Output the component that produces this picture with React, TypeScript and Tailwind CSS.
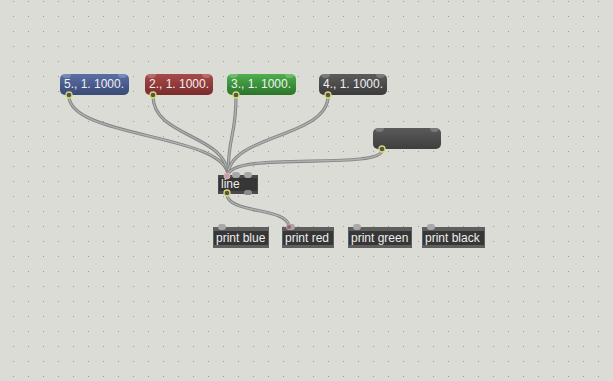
import React from "react";

const font = { fontFamily: '"Liberation Sans", Arial, sans-serif' };

function Msg({ left, top, w, cls, label }: { left: string; top: string; w: string; cls: string; label: string }) {
  return (
    <div className={`absolute ${left} ${top} ${w} h-[21px] rounded-[5px] ${cls} overflow-hidden`}>
      <div className="absolute left-[2px] top-[-4px] w-[9px] h-[8px] rounded-full bg-white/20" />
      <div className="absolute right-[2px] top-[-4px] w-[9px] h-[8px] rounded-full bg-white/20" />
      <div className="absolute left-[4px] top-[3px] text-[12px] leading-[14px] text-[#f0f0f0] whitespace-nowrap" style={font}>
        {label}
      </div>
    </div>
  );
}

function Obj({ left, top, w, label }: { left: string; top: string; w: string; label: string }) {
  return (
    <div className={`absolute ${left} ${top} ${w} h-[21px] bg-[#5f5f5f] flex flex-col`}>
      <div className="h-[4px] relative">
        <div className="absolute left-[5px] top-[-3px] w-[8px] h-[6px] rounded-full bg-[#a8a8a8]" />
      </div>
      <div className="flex-1 bg-[#363636] mx-[1px] px-[2px] text-[12px] leading-[14px] text-[#eeeeee] whitespace-nowrap" style={font}>
        {label}
      </div>
      <div className="h-[3px]" />
    </div>
  );
}

export default function App() {
  return (
    <div className="relative w-[613px] h-[381px] bg-[#dcdcd7] overflow-hidden">
      <svg className="absolute inset-0" width="613" height="381">
        <defs>
          <pattern id="dots" x="0" y="0" width="15" height="15" patternUnits="userSpaceOnUse">
            <rect x="13" y="1" width="1" height="1" fill="#9c9c9a" />
          </pattern>
        </defs>
        <rect width="613" height="381" fill="url(#dots)" />
      </svg>

      <Msg left="left-[60px]" top="top-[74px]" w="w-[69px]" cls="bg-gradient-to-b from-[#5b6fa3] to-[#3a4a76]" label="5., 1. 1000." />
      <Msg left="left-[145px]" top="top-[74px]" w="w-[68px]" cls="bg-gradient-to-b from-[#a84a4a] to-[#7a2c2c]" label="2., 1. 1000." />
      <Msg left="left-[227px]" top="top-[74px]" w="w-[69px]" cls="bg-gradient-to-b from-[#4eb04e] to-[#2b742b]" label="3., 1. 1000." />
      <Msg left="left-[319px]" top="top-[74px]" w="w-[68px]" cls="bg-gradient-to-b from-[#5c5c5c] to-[#3b3b3b]" label="4., 1. 1000." />
      <Msg left="left-[373px]" top="top-[128px]" w="w-[68px]" cls="bg-gradient-to-b from-[#5a5a5a] to-[#3e3f3f]" label="" />

      <div className="absolute left-[218px] top-[175px] w-[40px] h-[19px] bg-[#4a4a4a] flex flex-col">
        <div className="h-[3px] relative">
          <div className="absolute left-[14px] top-[-3px] w-[8px] h-[6px] rounded-full bg-[#a8a8a8]" />
          <div className="absolute left-[26px] top-[-3px] w-[8px] h-[6px] rounded-full bg-[#a8a8a8]" />
        </div>
        <div className="flex-1 bg-[#363636] mx-[1px] px-[2px] text-[12px] leading-[13px] text-[#eeeeee]" style={font}>
          line
        </div>
        <div className="h-[3px] relative">
          <div className="absolute left-[26px] top-[-1px] w-[8px] h-[5px] rounded-full bg-[#8a8a8a]" />
        </div>
      </div>

      <Obj left="left-[213px]" top="top-[227px]" w="w-[56px]" label="print blue" />
      <Obj left="left-[282px]" top="top-[227px]" w="w-[52px]" label="print red" />
      <Obj left="left-[348px]" top="top-[227px]" w="w-[64px]" label="print green" />
      <Obj left="left-[422px]" top="top-[227px]" w="w-[63px]" label="print black" />

      <svg className="absolute inset-0 pointer-events-none" width="613" height="381">
        <g fill="none" strokeLinecap="round">
          {[
            "M69 96 C69 138, 228 134, 228 176",
            "M153 96 C153 138, 228 134, 228 176",
            "M236 96 C236 138, 228 134, 228 176",
            "M328 96 C328 138, 228 134, 228 176",
            "M382 150 C382 171, 228 150, 228 176",
            "M227 194 C227 214, 289 207, 289 227",
          ].map((d, i) => (
            <g key={i}>
              <path d={d} stroke="#828282" strokeWidth="3.2" />
              <path d={d} stroke="#b0b0b0" strokeWidth="1.4" />
            </g>
          ))}
        </g>
        {[
          [69, 95],
          [153, 95],
          [236, 95],
          [328, 95],
          [382, 149],
          [227, 193],
        ].map(([x, y], i) => (
          <circle key={i} cx={x} cy={y} r="3" fill="#555" stroke="#d8d870" strokeWidth="1.3" />
        ))}
        <circle cx="227" cy="176" r="3" fill="#c9a0a8" stroke="#e0b0b8" strokeWidth="1" />
        <circle cx="289" cy="227" r="2.5" fill="#8a6a70" stroke="#c9a0a8" strokeWidth="1" />
      </svg>
    </div>
  );
}
